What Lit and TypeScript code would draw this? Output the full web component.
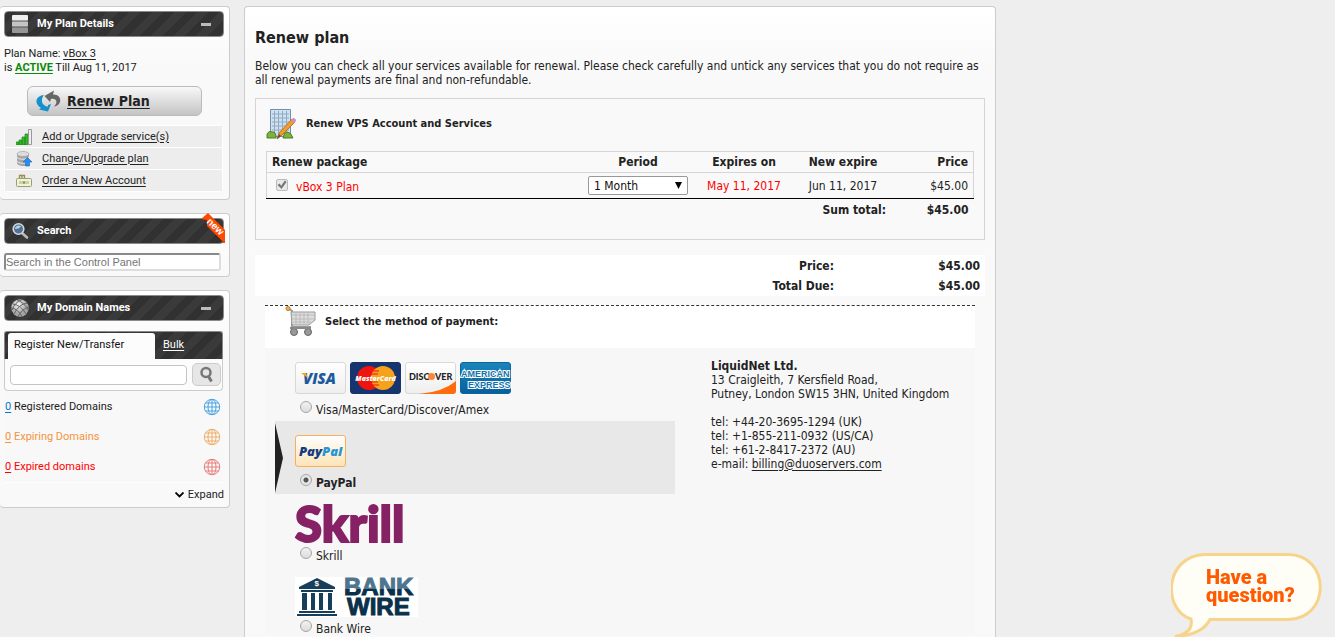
import { LitElement, html, css, svg } from "lit";
import { customElement, property } from "lit/decorators.js";

const globe = (color: string) => svg`
  <svg width="18" height="18" viewBox="0 0 18 18" fill="none" stroke=${color} stroke-width="1" aria-hidden="true">
    <circle cx="9" cy="9" r="7.7"/><ellipse cx="9" cy="9" rx="4" ry="7.7"/>
    <path d="M9 1v16M1 9h16M2.5 5h13M2.5 13h13"/>
  </svg>`;

const serverIcon = svg`
  <svg width="18" height="20" viewBox="0 0 18 20" aria-hidden="true">
    <rect x="1" y="1" width="16" height="6" rx="1" fill="#eee"/><rect x="1" y="7" width="16" height="6" rx="1" fill="#c4c4c4"/>
    <rect x="1" y="13" width="16" height="6" rx="1" fill="#969696"/><path d="M1 7h16M1 13h16" stroke="#555"/>
  </svg>`;

const searchIcon = svg`
  <svg width="18" height="18" viewBox="0 0 18 18" aria-hidden="true">
    <path d="M11 11l5 4.5" stroke="#bbb" stroke-width="2.6" stroke-linecap="round"/>
    <circle cx="7.5" cy="7" r="5.3" fill="#4f7396" stroke="#d5d9dd" stroke-width="1.6"/>
    <path d="M4 7a3.6 3.6 0 0 1 6-2.6Q8 7 4 7z" fill="#b8cde0"/>
  </svg>`;

const netIcon = svg`
  <svg width="20" height="20" viewBox="0 0 20 20" aria-hidden="true">
    <defs><radialGradient id="n" cx=".4" cy=".3"><stop offset="0" stop-color="#f4f4f4"/><stop offset="1" stop-color="#a4a4a4"/></radialGradient></defs>
    <circle cx="10" cy="10" r="8.7" fill="url(#n)"/>
    <path d="M3 6Q11 7 16 16M7 2q8 3 11 10M1.5 10Q8 11 12 18.500M17 5Q9 6 4 16M12 1.500Q5 4 2 12M18.500 9Q12 11 8 18.500" fill="none" stroke="#666" stroke-width="1"/>
  </svg>`;

@customElement("side-panel")
class SidePanel extends LitElement {
  @property() heading = "";
  @property() icon = "";
  @property({ type: Boolean }) collapsible = false;
  @property({ type: Boolean }) fresh = false;

  static styles = css`
    :host { display: block; box-sizing: border-box; position: relative; padding: 4px 5px 5px 4px;
      border: 1px solid #ccc; border-left: 0; border-radius: 4px;
      background: linear-gradient(#fff, #f9f9f9 60px); }
    .head { box-sizing: border-box; display: flex; align-items: center; height: 26px; padding: 0 12px 0 5px;
      border: 1px solid #8a8a8a; border-radius: 4px; color: #fff;
      background: repeating-linear-gradient(135deg, #313131 0 8px, #3a3a3a 8px 16px); }
    .icon { display: flex; justify-content: center; width: 20px; margin-right: 7px; }
    .title { flex: 1; margin: 0; font-size: 11px; line-height: 14px; font-weight: bold; padding-bottom: 1px; }
    .fold { width: 10px; height: 3px; padding: 0; border: 0; background: #bbb; }
    .new { position: absolute; right: 4px; top: -1px; overflow: visible; }
  `;

  render() {
    const icons: Record<string, unknown> = { server: serverIcon, search: searchIcon, net: netIcon };
    return html`
      <div class="head">
        <span class="icon">${icons[this.icon]}</span>
        <h2 class="title">${this.heading}</h2>
        ${this.collapsible ? html`<button class="fold" aria-label="Collapse"></button>` : ""}
      </div>
      ${this.fresh
        ? html`<svg class="new" width="24" height="31" viewBox="0 0 24 31">
            <path d="M14 22l9 8V20z" fill="#111"/>
            <path d="M0 6L7 0L24 17V30H23L6 13V7z" fill="#ff4800"/>
            <text x="12" y="16" text-anchor="middle" transform="rotate(44 12 16)" font-family="Liberation Sans, sans-serif" font-size="10" font-weight="bold" fill="#fff">new</text>
          </svg>`
        : ""}
      <slot></slot>`;
  }
}

const cardFrame = (fill: string, stroke: string) => svg`<rect x=".5" y=".5" width="50" height="31" rx="2.500" fill=${fill} stroke=${stroke}/>`;

const visa = html`<svg width="51" height="32" viewBox="0 0 51 32" role="img" aria-label="Visa">
  <defs><linearGradient id="vg" x2="0" y2="1"><stop stop-color="#fff"/><stop offset="1" stop-color="#eee"/></linearGradient></defs>
  ${cardFrame("url(#vg)", "#d8d8d8")}
  <text x="8" y="22" font-family="Open Sans, sans-serif" font-style="italic" font-weight="800" font-size="15" fill="#1b5a9c">VISA</text>
  <path d="M6 11h5l2 5z" fill="#f5a81c"/></svg>`;

const master = html`<svg width="51" height="32" viewBox="0 0 51 32" role="img" aria-label="MasterCard">
  ${cardFrame("#16356f", "#16356f")}
  <circle cx="19" cy="16" r="12" fill="#f01410"/><circle cx="33" cy="16" r="12" fill="#f7a21b"/>
  <path d="M22 9h7M21 12h7M21 20h7M22 23h7" stroke="#f01410"/>
  <text x="25.500" y="19" text-anchor="middle" font-family="Open Sans, sans-serif" font-style="italic" font-weight="800" font-size="7" fill="#fff">MasterCard</text></svg>`;

const discover = html`<svg width="51" height="32" viewBox="0 0 51 32" role="img" aria-label="Discover">
  <defs><linearGradient id="dg" x2="0" y2="1"><stop stop-color="#fff"/><stop offset="1" stop-color="#eee"/></linearGradient></defs>
  ${cardFrame("url(#dg)", "#d8d8d8")}
  <path d="M51 19v10q0 3-3 3H14Q38 30 51 19z" fill="#ff6c0c"/>
  <text x="4" y="18" font-family="Lato, sans-serif" font-weight="900" font-size="9" fill="#222">DISC</text>
  <circle cx="26.500" cy="14.500" r="3.500" fill="#f9863a"/>
  <text x="30" y="18" font-family="Lato, sans-serif" font-weight="900" font-size="9" fill="#222">VER</text></svg>`;

const amex = html`<svg width="51" height="32" viewBox="0 0 51 32" role="img" aria-label="American Express">
  <defs><linearGradient id="ag" x2="0" y2="1"><stop stop-color="#1b85bb"/><stop offset="1" stop-color="#075f9c"/></linearGradient></defs>
  ${cardFrame("url(#ag)", "#0b659f")}
  <g font-family="Liberation Sans, sans-serif" font-weight="bold" font-size="9" fill="#1272ac" stroke="#fff" stroke-width="2" paint-order="stroke">
    <text x="1" y="15">AMERICAN</text><text x="8" y="26">EXPRESS</text></g></svg>`;

const paypal = html`<svg width="51" height="32" viewBox="0 0 51 32" role="img" aria-label="PayPal">
  <defs><linearGradient id="pg" x2="0" y2="1"><stop stop-color="#fff"/><stop offset="1" stop-color="#fde3b6"/></linearGradient></defs>
  ${cardFrame("url(#pg)", "#f9ae58")}
  <text x="4" y="20.500" font-family="Open Sans, sans-serif" font-style="italic" font-weight="800" font-size="13" fill="#143b82">Pay<tspan fill="#2595d3">Pal</tspan></text></svg>`;

const skrill = html`<svg width="112" height="40" viewBox="0 0 112 40" role="img" aria-label="Skrill">
  <text x="0" y="38" font-family="Lato, sans-serif" font-weight="900" font-size="49" fill="#862165" stroke="#862165" stroke-width="2">Skrill</text></svg>`;

const bankwire = html`<svg width="123" height="40" viewBox="0 0 123 40" role="img" aria-label="Bank Wire">
  <defs><linearGradient id="bg" gradientUnits="userSpaceOnUse" x1="0" y1="0" x2="0" y2="20"><stop offset=".6" stop-color="#4d7590"/><stop offset=".6" stop-color="#0b3049"/></linearGradient></defs>
  <rect width="123" height="40" fill="#fff"/>
  <g fill="#173f59"><path d="M4 10L22 1l18 9v2H4z"/><path d="M6 13h32v2H6zM4 34h36v2H4zM2 37h40v2H2z"/>
  <path d="M7 16h5v17H7zM16 16h4v17h-4zM24 16h4v17h-4zM33 16h4v17h-4z"/></g>
  <text x="19.500" y="9" font-family="Liberation Sans, sans-serif" font-size="8" font-weight="bold" fill="#fff">$</text>
  <g font-family="Liberation Sans, sans-serif" font-weight="bold" font-size="24" stroke-width="1">
  <text x="49" y="18" fill="url(#bg)" stroke="url(#bg)">BANK</text><text x="52" y="38" fill="#0b3049" stroke="#0b3049">WIRE</text></g></svg>`;

const methods = [
  { id: "card", label: "Visa/MasterCard/Discover/Amex", logo: html`${visa}${master}${discover}${amex}` },
  { id: "paypal", label: "PayPal", logo: paypal },
  { id: "skrill", label: "Skrill", logo: skrill },
  { id: "wire", label: "Bank Wire", logo: bankwire },
];

@customElement("payment-methods")
class PaymentMethods extends LitElement {
  @property() selected = "paypal";

  static styles = css`
    :host { display: block; }
    .method { position: relative; padding: 10px 20px 5px; }
    .method:last-child { padding-bottom: 0; }
    .on { background: #e8e8e8; font-weight: bold; }
    .pointer { position: absolute; left: 0; top: 2px; }
    .logos { display: flex; align-items: center; gap: 4px; height: 40px; }
    .logos svg { overflow: visible; }
    .pick { display: flex; align-items: center; gap: 4px; height: 14px; margin-top: 4px; padding-left: 5px; line-height: 14px; }
    .radio { appearance: none; box-sizing: border-box; width: 12px; height: 12px; margin: 0 0 4px; border: 1px solid #a5a5a5;
      border-radius: 50%; background: linear-gradient(#f2f2f2, #dcdcdc); }
    .radio:checked { background: radial-gradient(circle, #555 0 2px, #e6e6e6 3px); }
    .label { padding-top: 2px; }
  `;

  render() {
    return methods.map((m) => {
      const on = m.id === this.selected;
      return html`<div class="method ${on ? "on" : ""}">
        ${on
          ? html`<svg class="pointer" width="8" height="70" viewBox="0 0 8 70"><path d="M0 0L8 35L0 70z" fill="#222"/></svg>`
          : ""}
        <div class="logos">${m.logo}</div>
        <div class="pick">
          <input class="radio" type="radio" name="method" id=${m.id} .checked=${on} @change=${() => (this.selected = m.id)} />
          <label class="label" for=${m.id}>${m.label}</label>
        </div>
      </div>`;
    });
  }
}

const signalIcon = svg`<svg width="16" height="16" viewBox="0 0 16 16"><path d="M0 13h3v3H0zM3 11h3v5H3zM6 8h3v8H6zM9 5h3v11H9z" fill="#3cb52e" stroke="#198a18" stroke-width=".7"/><path d="M12.500.5h3v15h-3z" fill="#eee" stroke="#999"/></svg>`;
const discIcon = svg`<svg width="16" height="16" viewBox="0 0 16 16"><path d="M1 3v9c0 4 12 4 12 0V3z" fill="#a8a8a8"/><ellipse cx="7" cy="3" rx="6" ry="2.500" fill="#ddd" stroke="#999" stroke-width=".6"/><path d="M1 6c0 3 12 3 12 0M1 10c0 3 12 3 12 0" fill="none" stroke="#e4e4e4"/><path d="M11.500 6.500L16 11h-2.500v4h-4v-4H7z" fill="#2b8cf0" stroke="#1767c0" stroke-width=".6"/></svg>`;
const accountIcon = svg`<svg width="16" height="14" viewBox="0 0 16 14"><path d="M3.500 4V1.500h5V4M6 1v3" fill="none" stroke="#a08850" stroke-width="1.300"/><rect x=".5" y="4.500" width="15" height="8" rx="1" fill="#f2f2d8" stroke="#9aa070"/><path d="M3 7h10v3H3z" fill="#c9d3a4"/><path d="M7 7.500h2v2H7z" fill="#7a9060"/></svg>`;

@customElement("app-root")
class AppRoot extends LitElement {
  static styles = css`
    :host { display: flex; align-items: stretch; gap: 14px; box-sizing: border-box; min-height: 100vh; padding-top: 6px;
      background: #eee; color: #222; font-family: "DejaVu Sans Condensed", Tahoma, sans-serif; font-size: 12px; line-height: 14px; }
    a { color: inherit; text-underline-offset: 2px; }
    .side { flex: 0 0 230px; display: flex; flex-direction: column; gap: 13px; font-family: Roboto, Tahoma, sans-serif; font-size: 11px; }
    .info { margin: 10px 0 11px; }
    .active { color: #0a8a0a; font-weight: bold; }
    .renew { box-sizing: border-box; display: flex; align-items: center; gap: 6px; width: 175px; height: 30px; margin: 0 auto 9px 23px; padding: 0 8px;
      border: 1px solid #bbb; border-radius: 6px; background: linear-gradient(#f8f8f8, #c4c4c4);
      font-family: "DejaVu Sans Condensed", Tahoma, sans-serif; font-size: 14px; line-height: 18px; font-weight: bold; }
    .links { list-style: none; margin: 0 1px 2px 0; padding: 0; border: 1px solid #fff; border-radius: 4px; }
    .link { display: flex; align-items: center; gap: 10px; height: 21px; padding-left: 11px; background: #ededed; }
    .link + .link { border-top: 1px solid #fff; }
    .link svg { width: 16px; }
    .find { display: block; box-sizing: border-box; width: 217px; height: 18px; margin-top: 9px; padding: 0;
      border: 2px inset #ddd; border-radius: 3px; background: #fff; font: 11px "Liberation Sans", sans-serif; }
    .find::placeholder { color: #757575; }
    .tabs { box-sizing: border-box; display: flex; height: 28px; margin: 10px 1px 0 0; padding: 1px 0 0 3px; border: 1px solid #888; border-bottom: 0; border-radius: 3px 3px 0 0;
      background: repeating-linear-gradient(135deg, #313131 0 8px, #3a3a3a 8px 16px); line-height: 24px; }
    .tab { box-sizing: border-box; width: 147px; padding: 0 6px 3px; border: 0; border-radius: 3px 3px 0 0; background: #fcfcfc; color: #111; font: inherit; text-align: left; }
    .bulk { margin-left: 8px; color: #fff; }
    .domain { display: flex; align-items: center; justify-content: space-between; box-sizing: border-box; height: 32px; margin-right: 1px; padding: 0 1px 0 5px; border: 1px solid #ccc; border-top: 0; border-radius: 0 0 4px 4px; background: #fcfcfc; }
    .name { box-sizing: border-box; width: 177px; height: 20px; border: 1px solid #c4c4c4; border-radius: 4px; background: #fff; }
    .go { box-sizing: border-box; display: flex; align-items: center; justify-content: center; width: 29px; height: 23px; padding: 0; border: 1px solid #ccc; border-radius: 5px; background: #e6e6e6; }
    .counts { list-style: none; margin: 1px 1px 0 0; padding: 0; background: #f8f8f8; border-bottom: 1px solid #fff; }
    .count { display: flex; align-items: center; justify-content: space-between; height: 30px; padding: 0 2px 0 1px; }
    .orange { color: #f29440; } .red { color: #f00; } .blue { color: #0078d0; }
    .expand { display: flex; align-items: center; justify-content: flex-end; gap: 4px; width: 100%; padding: 5px 0 0; border: 0; background: none; font: inherit; line-height: 14px; color: #222; }
    .main { flex: 0 1 752px; box-sizing: border-box; padding: 0 10px; border: 1px solid #ccc; border-bottom: 0; border-radius: 4px 4px 0 0; background: linear-gradient(#fff, #f9f9f9 60px); }
    .title { margin: 21px 0 11px; font-size: 16px; line-height: 20px; }
    .intro { margin: 0 0 11px; }
    .box { border: 1px solid #d5d5d5; padding: 9px 10px 18px 10px; }
    .boxhead { display: flex; align-items: center; gap: 9px; margin: 0 0 11px; font-size: 11px; line-height: 14px; }
    .table { width: 100%; border-collapse: collapse; }
    .table th, .table td { padding: 0 5px; text-align: center; }
    .table .first { text-align: left; } .table .last { text-align: right; }
    .hrow { height: 21px; border: 1px solid #d5d5d5; }
    .row { height: 26px; border: 1px solid #d5d5d5; border-bottom: 1px solid #000; }
    .sum { height: 22px; font-weight: bold; }
    .table .sumlabel { text-align: right; }
    .pkg { display: flex; align-items: center; gap: 8px; padding: 3px 0 0 4px; }
    .check { appearance: none; box-sizing: border-box; width: 12px; height: 12px; margin: 0 0 4px; border: 1px solid #bbb; border-radius: 2px; background: #e8e8e8; }
    .check::before { content: ""; display: block; height: 10px; background: #777; clip-path: polygon(5% 50%, 25% 35%, 42% 58%, 78% 5%, 95% 20%, 45% 90%); }
    .pick { position: relative; display: inline-block; vertical-align: middle; }
    .select { appearance: none; display: block; box-sizing: border-box; width: 100px; height: 19px; padding: 0 5px; border: 1px solid #999; border-radius: 2px; background: #fff; color: #111; font: inherit; }
    .arrow { position: absolute; right: 6px; top: 6px; pointer-events: none; }
    .totals { display: grid; grid-template-columns: 1fr 146px; margin: 15px 0 9px; padding: 1px 5px 0 0; background: #fff; font-weight: bold; line-height: 20px; text-align: right; }
    .totals dt, .totals dd { margin: 0; }
    .payhead { display: flex; gap: 9px; box-sizing: border-box; height: 43px; margin: 0 10px; padding-left: 20px; border-top: 1px dashed #333; background: #fff; font-size: 11px; }
    .paytitle { margin: 9px 0 0; font-size: 11px; line-height: 14px; }
    .pay { display: flex; align-items: flex-start; gap: 36px; margin: 0 10px; padding-left: 10px; background: #f7f7f7; }
    .methods { flex: 0 1 400px; }
    .address { margin-top: 11px; font-style: normal; }
    .chat { position: fixed; right: 12px; bottom: 0; padding: 0; border: 0; background: none; line-height: 0; }
  `;

  render() {
    return html`
      <aside class="side">
        <side-panel heading="My Plan Details" icon="server" collapsible>
          <p class="info">Plan Name: <a href="#plan">vBox 3</a><br />is <a class="active" href="#status">ACTIVE</a> Till Aug 11, 2017</p>
          <a class="renew" href="#renew">
            <svg width="25" height="22" viewBox="0 0 25 22" aria-hidden="true">
              <path d="M8 5C-1 6-2 14 5 18L3 19.500l9 2L15 14l-3 1v1.500C6 16 4 10 8 5z" fill="#1690cc"/>
              <path d="M18 16.500C27 15 26 4 17 4.500L18 .5 8.500 6 14 12l1-3c6-1 7 4 3 7.500z" fill="#666"/>
            </svg>Renew Plan</a>
          <ul class="links">
            <li class="link">${signalIcon}<a href="#add">Add or Upgrade service(s)</a></li>
            <li class="link">${discIcon}<a href="#change">Change/Upgrade plan</a></li>
            <li class="link">${accountIcon}<a href="#order">Order a New Account</a></li>
          </ul>
        </side-panel>
        <side-panel heading="Search" icon="search" fresh>
          <input class="find" type="search" aria-label="Search" placeholder="Search in the Control Panel" />
        </side-panel>
        <side-panel heading="My Domain Names" icon="net" collapsible>
          <div class="tabs"><button class="tab">Register New/Transfer</button><a class="bulk" href="#bulk">Bulk</a></div>
          <div class="domain">
            <input class="name" type="text" aria-label="Domain name" />
            <button class="go" aria-label="Search domain">
              <svg width="16" height="18" viewBox="0 0 16 18" fill="none" stroke="#777"><circle cx="7" cy="6.500" r="4.500" stroke-width="2.500"/><path d="M9.500 10.500l3 5" stroke-width="3"/></svg>
            </button>
          </div>
          <ul class="counts">
            <li class="count"><span><a class="blue" href="#registered">0</a> Registered Domains</span>${globe("#4ba3e3")}</li>
            <li class="count orange"><span><a href="#expiring">0</a> Expiring Domains</span>${globe("#efae6b")}</li>
            <li class="count red"><span><a href="#expired">0</a> Expired domains</span>${globe("#e77f7a")}</li>
          </ul>
          <button class="expand"><svg width="9" height="6" viewBox="0 0 9 6"><path d="M.5.5l4 4 4-4" fill="none" stroke="#000" stroke-width="1.800"/></svg>Expand</button>
        </side-panel>
      </aside>
      <main class="main">
        <h1 class="title">Renew plan</h1>
        <p class="intro">Below you can check all your services available for renewal. Please check carefully and untick any services that you do not require as all renewal payments are final and non-refundable.</p>
        <section class="box">
          <h2 class="boxhead">
            <svg width="31" height="32" viewBox="0 0 31 32" aria-hidden="true">
              <path d="M4.500 1.500h20v27h-20z" fill="#cfe0f0" stroke="#7090ae"/>
              <path d="M8.500 3v24M12.500 3v24M16.500 3v24M20.500 3v24M6 6h17M6 10h17M6 14h17M6 18h17M6 22h17" stroke="#8fabc5"/>
              <path d="M1 30v-4q2-4 5-2 4-1 4 6zM17 30q1-6 4-6 4 0 6 6z" fill="#7db33c" stroke="#4d7e20"/>
              <path d="M11 31l2-6L26 11l3 3-14 14z" fill="#f59b2c" stroke="#b0651a" stroke-width=".8"/><path d="M25 12l2-2q3 0 3 3l-2 2z" fill="#c991b9"/><path d="M11 31l2-5 2 2z" fill="#555"/>
            </svg>Renew VPS Account and Services</h2>
          <table class="table">
            <thead>
              <tr class="hrow"><th class="first">Renew package</th><th width="100">Period</th><th width="92">Expires on</th><th width="86">New expire</th><th class="last" width="72">Price</th></tr>
            </thead>
            <tbody>
              <tr class="row">
                <td class="first"><span class="pkg red"><input class="check" type="checkbox" id="pkg" checked disabled /><label for="pkg">vBox 3 Plan</label></span></td>
                <td><span class="pick"><select class="select" aria-label="Period"><option>1 Month</option></select><svg class="arrow" width="7" height="7" viewBox="0 0 7 7"><path d="M0 0h7L3.500 7z" fill="#000"/></svg></span></td>
                <td class="red">May 11, 2017</td><td>Jun 11, 2017</td><td class="last">$45.00</td>
              </tr>
              <tr class="sum"><td class="sumlabel" colspan="4">Sum total:</td><td class="last">$45.00</td></tr>
            </tbody>
          </table>
        </section>
        <dl class="totals"><dt>Price:</dt><dd>$45.00</dd><dt>Total Due:</dt><dd>$45.00</dd></dl>
        <div class="payhead">
          <svg width="31" height="31" viewBox="0 0 31 31" aria-hidden="true">
            <path d="M3 2l4 3v16h19" fill="none" stroke="#999" stroke-width="2"/><circle cx="3" cy="2.500" r="2" fill="#f4b04b" stroke="#b77a22"/>
            <path d="M6 6h24v8l-6 5H7z" fill="#ddd" stroke="#999"/><path d="M7 9h22M7 13h22M8 16h18M11 6v12M15 6v12M19 6v12M23 6v12" stroke="#bbb"/>
            <circle cx="9" cy="26" r="3.500" fill="#999" stroke="#666"/><circle cx="23" cy="26" r="3.500" fill="#999" stroke="#666"/><path d="M5 22h21" stroke="#888" stroke-width="2"/>
          </svg>
          <h2 class="paytitle">Select the method of payment:</h2>
        </div>
        <div class="pay">
          <payment-methods class="methods"></payment-methods>
          <address class="address"><b>LiquidNet Ltd.</b><br />13 Craigleith, 7 Kersfield Road,<br />Putney, London SW15 3HN, United Kingdom<br /><br />tel: +44-20-3695-1294 (UK)<br />tel: +1-855-211-0932 (US/CA)<br />tel: +61-2-8417-2372 (AU)<br />e-mail: <a href="mailto:billing@duoservers.com">billing@duoservers.com</a></address>
        </div>
      </main>
      <button class="chat">
        <svg width="152" height="84" viewBox="0 0 152 84">
          <path d="M34 1.500H117C160 1.500 160 66.500 117 66.500H39Q31 82 4 83.500Q23 80 20 66C-8 58-8 3 34 1.500z" fill="#fffef6" stroke="#f7d48b" stroke-width="3"/>
          <g font-family="Roboto, sans-serif" font-weight="900" font-size="20" fill="#ff5a00"><text x="35" y="31">Have a</text><text x="35" y="49">question?</text></g>
        </svg>
      </button>`;
  }
}
